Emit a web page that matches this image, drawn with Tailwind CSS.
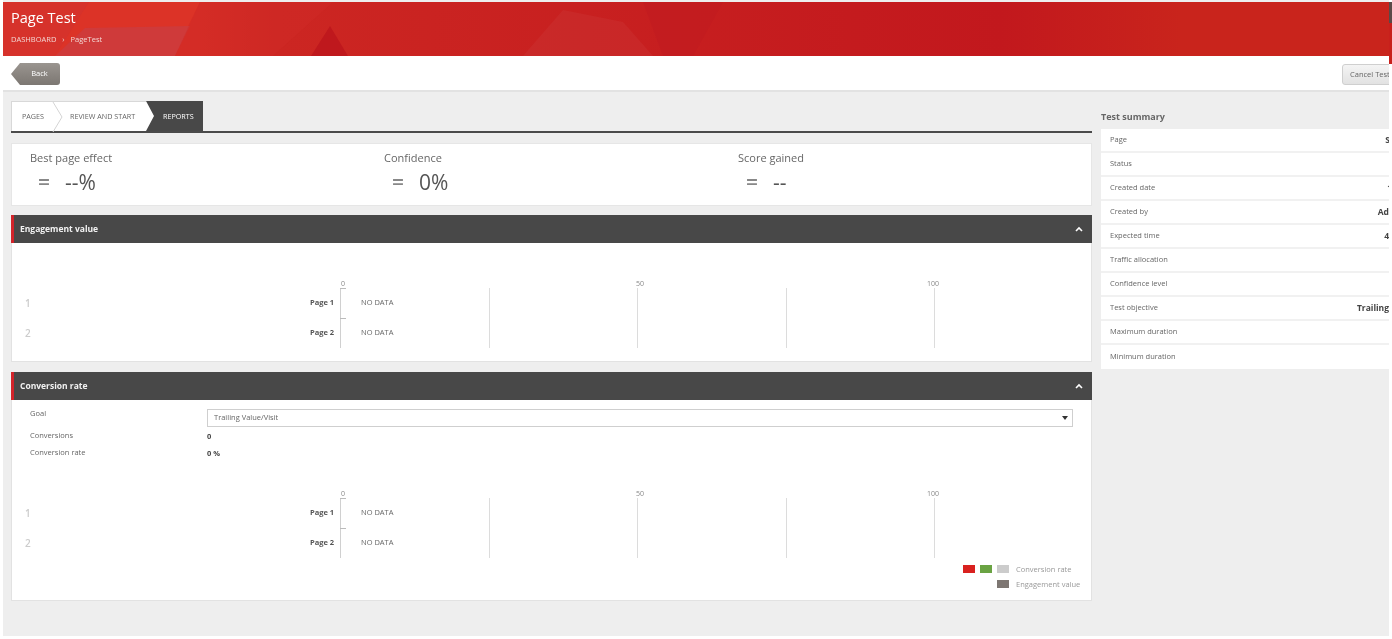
<!DOCTYPE html>
<html lang="en">
<head>
    <meta charset="UTF-8">
    <title>Page Test</title>
    <script src="https://cdn.jsdelivr.net/npm/@tailwindcss/browser@4"></script>
</head>
<body class="relative bg-white h-[639px] overflow-hidden font-['Open_Sans',sans-serif] text-[#555]">
    <div class="w-[1386px] h-[636px] overflow-hidden ml-[3px] pt-[2px] bg-[#eeeeee] blur-[0.35px]">
        <!-- Header -->
        <header class="relative h-[54px] bg-[#c8201c] overflow-hidden">
            <svg class="absolute inset-0" width="1386" height="54" viewBox="0 0 1386 54" preserveAspectRatio="none">
                <defs>
                    <linearGradient id="redFade" x1="0" x2="1" y1="0" y2="0">
                        <stop offset="0" stop-color="#d9302a"/>
                        <stop offset="0.14" stop-color="#d92f26"/>
                        <stop offset="0.2" stop-color="#cc2622"/>
                        <stop offset="0.72" stop-color="#c2181d"/>
                        <stop offset="0.85" stop-color="#c9241c"/>
                        <stop offset="1" stop-color="#c9241c"/>
                    </linearGradient>
                </defs>
                <rect width="1386" height="54" fill="url(#redFade)"/>
                <polygon points="0,0 86,0 52,54 0,54" fill="#d6322b"/>
                <polygon points="86,0 197,0 170,54 52,54" fill="#dc3327"/>
                <polygon points="82,26 187,24 172,54 52,54" fill="#cf3a3a"/>
                <polygon points="327,24 345,54 308,54" fill="#bf181d"/>
                <polygon points="197,0 330,0 270,54 172,54" fill="#d02a25" opacity="0.5"/>
                <polygon points="520,54 560,8 620,20 650,54" fill="#cd3b3b" opacity="0.3"/>
                <polygon points="640,0 720,0 690,54 660,54" fill="#c01a1f" opacity="0.5"/>
            </svg>
            <div class="relative pl-[8px] pt-[6px]">
                <h1 class="text-[14.5px] leading-[20px] text-white font-medium">Page Test</h1>
                <div class="mt-[6px] flex items-center text-[7.5px] leading-[10px] text-[#f3d5d2]">
                    <span>DASHBOARD</span>
                    <span class="mx-[6px]">›</span>
                    <span>PageTest</span>
                </div>
            </div>
        </header>

        <!-- Toolbar -->
        <div class="h-[36px] bg-white border-b-[2px] border-[#e2e2e2] flex items-start justify-between pt-[7px] pl-[8px]">
            <button class="w-[49px] h-[22px] rounded-r-[3px] bg-gradient-to-b from-[#9a9590] to-[#7c7772] text-white text-[7.5px] pl-[8px] [clip-path:polygon(9px_0,100%_0,100%_100%,9px_100%,0_50%)]">Back</button>
            <button class="w-[63px] h-[21px] shrink-0 mt-[1px] -mr-[16px] text-left pl-[7px] rounded-[3px] border border-[#cfcfcf] bg-gradient-to-b from-[#f4f4f4] to-[#e2e2e2] text-[7.5px] text-[#666] whitespace-nowrap">Cancel Test</button>
        </div>

        <main class="flex pl-[8px] pt-[9px]">
            <!-- Left column -->
            <div class="w-[1081px] shrink-0">
                <!-- Tabs -->
                <div class="h-[32px] border-b-[2px] border-[#4a4a4a]">
                    <div class="w-[192px] h-[30px] flex bg-white text-[7.2px]">
                        <div class="relative w-[135px] flex text-[#666] border-t border-l border-[#d8d8d8]">
                            <span class="w-[41px] leading-[29px] pl-[10px]">PAGES</span>
                            <svg class="absolute left-[40px] top-0" width="12" height="30" viewBox="0 0 12 30"><path d="M1 0l9 15-9 15" fill="none" stroke="#d4d4d4"/></svg>
                            <span class="leading-[29px] pl-[17px]">REVIEW AND START</span>
                        </div>
                        <div class="w-[57px] bg-[#484848] text-white leading-[30px] pl-[17px] [clip-path:polygon(0_0,100%_0,100%_100%,0_100%,8px_50%)]">REPORTS</div>
                    </div>
                </div>

                <!-- Stats -->
                <div class="mt-[10px] h-[63px] bg-white border border-[#e6e6e6] grid grid-cols-[354px_354px_1fr] pl-[18px] pt-[6px]">
                    <div>
                        <div class="text-[11px] leading-[15px] text-[#666]">Best page effect</div>
                        <div class="flex items-center ml-[8px] mt-[5px] h-[26px] text-[21px] text-[#555]"><span class="w-[27px] font-semibold text-[#888]">=</span>--%</div>
                    </div>
                    <div>
                        <div class="text-[11px] leading-[15px] text-[#666]">Confidence</div>
                        <div class="flex items-center ml-[8px] mt-[5px] h-[26px] text-[21px] text-[#555]"><span class="w-[27px] font-semibold text-[#888]">=</span>0%</div>
                    </div>
                    <div>
                        <div class="text-[11px] leading-[15px] text-[#666]">Score gained</div>
                        <div class="flex items-center ml-[8px] mt-[5px] h-[26px] text-[21px] text-[#555]"><span class="w-[27px] font-semibold text-[#888]">=</span>--</div>
                    </div>
                </div>

                <!-- Engagement value -->
                <section class="mt-[9px]">
                    <div class="h-[28px] bg-[#484848] border-l-[3px] border-[#d2232a] flex items-center justify-between pl-[6px] pr-[9px]">
                        <h2 class="text-[8.5px] font-bold text-[#f2f2f2]">Engagement value</h2>
                        <svg width="8" height="6" viewBox="0 0 8 6"><path d="M1 5l3-3 3 3" fill="none" stroke="#fff" stroke-width="1.6"/></svg>
                    </div>
                    <div class="h-[119px] bg-white border border-t-0 border-[#e2e2e2] pt-[36px]">
                        <div class="relative h-[70px]">
                            <span class="absolute left-[329px] top-0 text-[7px] leading-[9px] text-[#888]">0</span>
                            <span class="absolute left-[624px] top-0 text-[7px] leading-[9px] text-[#888]">50</span>
                            <span class="absolute left-[915px] top-0 text-[7px] leading-[9px] text-[#888]">100</span>
                            <i class="absolute left-[328px] top-[9px] w-px h-[60px] bg-[#d0d0d0]"></i>
                            <i class="absolute left-[328px] top-[9px] w-[6px] h-px bg-[#bbb]"></i>
                            <i class="absolute left-[328px] top-[39px] w-[6px] h-px bg-[#bbb]"></i>
                            <i class="absolute left-[477px] top-[9px] w-px h-[60px] bg-[#dcdcdc]"></i>
                            <i class="absolute left-[625px] top-[9px] w-px h-[60px] bg-[#dcdcdc]"></i>
                            <i class="absolute left-[774px] top-[9px] w-px h-[60px] bg-[#dcdcdc]"></i>
                            <i class="absolute left-[922px] top-[9px] w-px h-[60px] bg-[#dcdcdc]"></i>
                            <span class="absolute left-[13px] top-[17px] text-[10px] leading-[14px] font-semibold text-[#ccc]">1</span>
                            <span class="absolute left-[13px] top-[47px] text-[10px] leading-[14px] font-semibold text-[#ccc]">2</span>
                            <span class="absolute left-[298px] top-[18px] text-[7.5px] leading-[10px] font-bold text-[#555]">Page 1</span>
                            <span class="absolute left-[298px] top-[48px] text-[7.5px] leading-[10px] font-bold text-[#555]">Page 2</span>
                            <span class="absolute left-[349px] top-[18px] text-[7.5px] leading-[10px] text-[#666]">NO DATA</span>
                            <span class="absolute left-[349px] top-[48px] text-[7.5px] leading-[10px] text-[#666]">NO DATA</span>
                        </div>
                    </div>
                </section>

                <!-- Conversion rate -->
                <section class="mt-[10px]">
                    <div class="h-[28px] bg-[#484848] border-l-[3px] border-[#d2232a] flex items-center justify-between pl-[6px] pr-[9px]">
                        <h2 class="text-[8.5px] font-bold text-[#f2f2f2]">Conversion rate</h2>
                        <svg width="8" height="6" viewBox="0 0 8 6"><path d="M1 5l3-3 3 3" fill="none" stroke="#fff" stroke-width="1.6"/></svg>
                    </div>
                    <div class="h-[201px] bg-white border border-t-0 border-[#e2e2e2] pt-[9px]">
                        <div class="grid grid-cols-[177px_866px] pl-[18px] text-[7.5px] text-[#666]">
                            <div class="-mt-px leading-[10px]">Goal</div>
                            <div class="h-[18px] border border-[#cfcfcf] flex items-center justify-between pl-[6px] pr-[4px]">
                                <span>Trailing Value/Visit</span>
                                <svg width="6" height="4" viewBox="0 0 6 4"><path d="M0 0h6L3 4z" fill="#333"/></svg>
                            </div>
                            <div class="mt-[3px] leading-[10px]">Conversions</div>
                            <div class="mt-[4px] leading-[10px] font-bold text-[#444]">0</div>
                            <div class="mt-[6px] leading-[10px]">Conversion rate</div>
                            <div class="mt-[7px] leading-[10px] font-bold text-[#444]">0 %</div>
                        </div>
                        <div class="relative h-[70px] mt-[31px]">
                            <span class="absolute left-[329px] top-0 text-[7px] leading-[9px] text-[#888]">0</span>
                            <span class="absolute left-[624px] top-0 text-[7px] leading-[9px] text-[#888]">50</span>
                            <span class="absolute left-[915px] top-0 text-[7px] leading-[9px] text-[#888]">100</span>
                            <i class="absolute left-[328px] top-[9px] w-px h-[60px] bg-[#d0d0d0]"></i>
                            <i class="absolute left-[328px] top-[9px] w-[6px] h-px bg-[#bbb]"></i>
                            <i class="absolute left-[328px] top-[39px] w-[6px] h-px bg-[#bbb]"></i>
                            <i class="absolute left-[477px] top-[9px] w-px h-[60px] bg-[#dcdcdc]"></i>
                            <i class="absolute left-[625px] top-[9px] w-px h-[60px] bg-[#dcdcdc]"></i>
                            <i class="absolute left-[774px] top-[9px] w-px h-[60px] bg-[#dcdcdc]"></i>
                            <i class="absolute left-[922px] top-[9px] w-px h-[60px] bg-[#dcdcdc]"></i>
                            <span class="absolute left-[13px] top-[17px] text-[10px] leading-[14px] font-semibold text-[#ccc]">1</span>
                            <span class="absolute left-[13px] top-[47px] text-[10px] leading-[14px] font-semibold text-[#ccc]">2</span>
                            <span class="absolute left-[298px] top-[18px] text-[7.5px] leading-[10px] font-bold text-[#555]">Page 1</span>
                            <span class="absolute left-[298px] top-[48px] text-[7.5px] leading-[10px] font-bold text-[#555]">Page 2</span>
                            <span class="absolute left-[349px] top-[18px] text-[7.5px] leading-[10px] text-[#666]">NO DATA</span>
                            <span class="absolute left-[349px] top-[48px] text-[7.5px] leading-[10px] text-[#666]">NO DATA</span>
                        </div>
                        <!-- Legend -->
                        <div class="mt-[6px] flex flex-col items-end pr-[13px] gap-[7px] text-[7.5px] leading-[8px] text-[#999]">
                            <div class="flex items-center">
                                <i class="w-[12px] h-[8px] bg-[#d9211f]"></i>
                                <i class="ml-[5px] w-[12px] h-[8px] bg-[#6aa343]"></i>
                                <i class="ml-[5px] w-[12px] h-[8px] bg-[#cccccc]"></i>
                                <span class="ml-[7px] w-[62px]">Conversion rate</span>
                            </div>
                            <div class="flex items-center">
                                <i class="w-[12px] h-[8px] bg-[#7d7672]"></i>
                                <span class="ml-[7px] w-[62px] whitespace-nowrap">Engagement value</span>
                            </div>
                        </div>
                    </div>
                </section>
            </div>

            <!-- Test summary -->
            <aside class="ml-[9px] w-[288px] shrink-0">
                <h3 class="text-[9px] leading-[12px] pt-[10px] font-bold text-[#666]">Test summary</h3>
                <dl class="mt-[6px] text-[7.5px] text-[#666]">
                    <div class="h-[24px] bg-white border-b-[2px] border-[#f1f1f1] flex items-center justify-between pl-[9px]"><dt>Page</dt><dd class="font-bold text-[#444] text-[8.5px] -mr-[1px]">S</dd></div>
                    <div class="h-[24px] bg-white border-b-[2px] border-[#f1f1f1] flex items-center justify-between pl-[9px]"><dt>Status</dt><dd></dd></div>
                    <div class="h-[24px] bg-white border-b-[2px] border-[#f1f1f1] flex items-center justify-between pl-[9px]"><dt>Created date</dt><dd class="font-bold text-[#444] text-[8.5px] -mr-[3px]">1</dd></div>
                    <div class="h-[24px] bg-white border-b-[2px] border-[#f1f1f1] flex items-center justify-between pl-[9px]"><dt>Created by</dt><dd class="font-bold text-[#444] text-[8.5px]">Ad</dd></div>
                    <div class="h-[24px] bg-white border-b-[2px] border-[#f1f1f1] flex items-center justify-between pl-[9px]"><dt>Expected time</dt><dd class="font-bold text-[#444] text-[8.5px]">4</dd></div>
                    <div class="h-[24px] bg-white border-b-[2px] border-[#f1f1f1] flex items-center justify-between pl-[9px]"><dt>Traffic allocation</dt><dd></dd></div>
                    <div class="h-[24px] bg-white border-b-[2px] border-[#f1f1f1] flex items-center justify-between pl-[9px]"><dt>Confidence level</dt><dd></dd></div>
                    <div class="h-[24px] bg-white border-b-[2px] border-[#f1f1f1] flex items-center justify-between pl-[9px]"><dt>Test objective</dt><dd class="font-bold text-[#444] text-[8.5px]">Trailing</dd></div>
                    <div class="h-[24px] bg-white border-b-[2px] border-[#f1f1f1] flex items-center justify-between pl-[9px]"><dt>Maximum duration</dt><dd></dd></div>
                    <div class="h-[24px] bg-white flex items-center justify-between pl-[9px]"><dt>Minimum duration</dt><dd></dd></div>
                </dl>
            </aside>
        </main>
    </div>
    <!-- sliver at the right edge of the capture -->
    <div class="absolute left-[1389px] top-[2px] w-[3px] h-[62px] bg-[#c8201c]">
        <div class="h-[21px] bg-[#5a4a48]"></div>
    </div>
</body>
</html>
